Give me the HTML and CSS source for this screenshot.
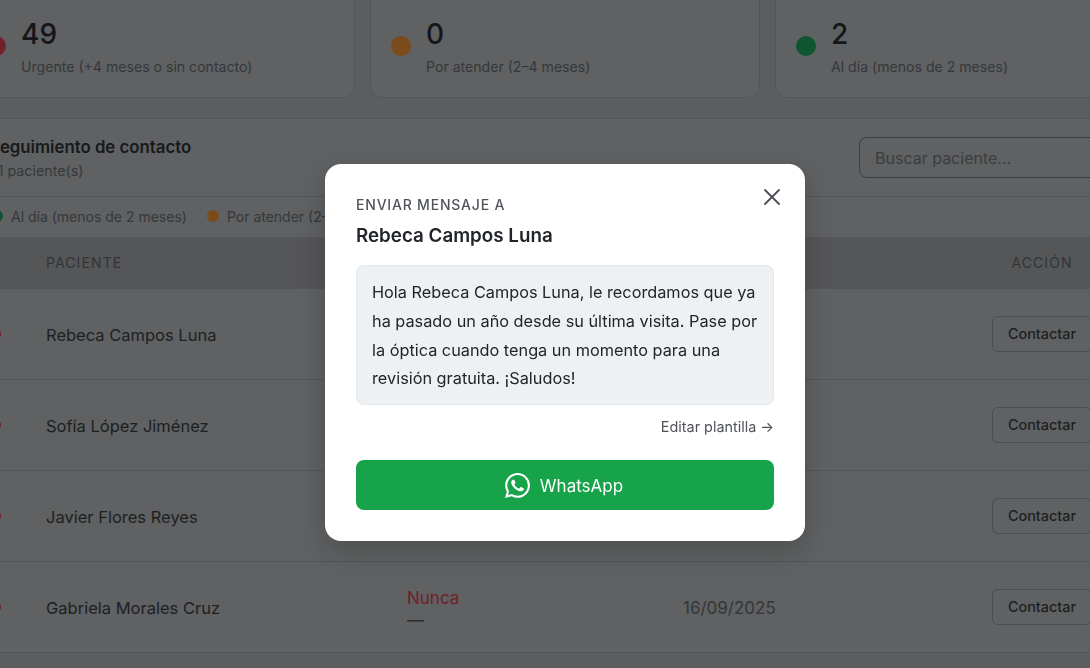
FILE: index.html
```html
<!DOCTYPE html>
<html lang="es">
<head>
<meta charset="utf-8">
<title>Seguimiento de contacto</title>
<link rel="stylesheet" href="styles.css">
</head>
<body>
<main class="page">
  <section class="stats">
    <div class="card"><span class="dot-lg red"></span><div><div class="num">49</div><div class="lbl">Urgente (+4 meses o sin contacto)</div></div></div>
    <div class="card"><span class="dot-lg orange"></span><div><div class="num">0</div><div class="lbl">Por atender (2–4 meses)</div></div></div>
    <div class="card"><span class="dot-lg green"></span><div><div class="num">2</div><div class="lbl">Al día (menos de 2 meses)</div></div></div>
  </section>
  <section class="panel">
    <header class="panel-head">
      <div><h2 class="title">Seguimiento de contacto</h2><div class="count">51 paciente(s)</div></div>
      <input class="search" placeholder="Buscar paciente...">
    </header>
    <div class="legend">
      <span class="leg"><span class="dot-sm green"></span>Al día (menos de 2 meses)</span>
      <span class="leg"><span class="dot-sm orange"></span>Por atender (2–4 meses)</span>
    </div>
    <div class="row thead"><span></span><span>PACIENTE</span><span></span><span></span><span class="act">ACCIÓN</span></div>
    <div class="row"><span class="dot-row"></span><span class="name">Rebeca Campos Luna</span><span></span><span></span><span class="act"><button class="btn">Contactar</button></span></div>
    <div class="row"><span class="dot-row"></span><span class="name">Sofía López Jiménez</span><span></span><span></span><span class="act"><button class="btn">Contactar</button></span></div>
    <div class="row"><span class="dot-row"></span><span class="name">Javier Flores Reyes</span><span></span><span></span><span class="act"><button class="btn">Contactar</button></span></div>
    <div class="row"><span class="dot-row"></span><span class="name">Gabriela Morales Cruz</span><span class="last"><span class="never">Nunca</span><span>—</span></span><span class="date">16/09/2025</span><span class="act"><button class="btn">Contactar</button></span></div>
  </section>
</main>
<div class="overlay">
  <div class="modal">
    <div class="modal-head">
      <div>
        <div class="eyebrow">ENVIAR MENSAJE A</div>
        <div class="who">Rebeca Campos Luna</div>
      </div>
      <svg class="close" viewBox="0 0 16 16" width="16" height="16" fill="none" stroke="#4b4f54" stroke-width="1.8" stroke-linecap="round"><path d="M1 1l14 14M15 1L1 15"/></svg>
    </div>
    <div class="msg">Hola Rebeca Campos Luna, le recordamos que ya ha pasado un año desde su última visita. Pase por la óptica cuando tenga un momento para una revisión gratuita. ¡Saludos!</div>
    <div class="edit-line"><span class="edit">Editar plantilla →</span></div>
    <button class="wa">
      <svg viewBox="0 0 24 24" width="25" height="25" fill="#fff"><path d="M17.472 14.382c-.297-.149-1.758-.867-2.03-.967-.273-.099-.471-.148-.67.15-.197.297-.767.966-.94 1.164-.173.199-.347.223-.644.075-.297-.15-1.255-.463-2.39-1.475-.883-.788-1.48-1.761-1.653-2.059-.173-.297-.018-.458.13-.606.134-.133.298-.347.446-.52.149-.174.198-.298.298-.497.099-.198.05-.371-.025-.52-.075-.149-.669-1.612-.916-2.207-.242-.579-.487-.5-.669-.51-.173-.008-.371-.01-.57-.01-.198 0-.52.074-.792.372-.272.297-1.04 1.016-1.04 2.479 0 1.462 1.065 2.875 1.213 3.074.149.198 2.096 3.2 5.077 4.487.709.306 1.262.489 1.694.625.712.227 1.36.195 1.871.118.571-.085 1.758-.719 2.006-1.413.248-.694.248-1.289.173-1.413-.074-.124-.272-.198-.57-.347m-5.421 7.403h-.004a9.87 9.87 0 01-5.031-1.378l-.361-.214-3.741.982.998-3.648-.235-.374a9.86 9.86 0 01-1.51-5.26c.001-5.45 4.436-9.884 9.888-9.884 2.64 0 5.122 1.03 6.988 2.898a9.825 9.825 0 012.893 6.994c-.003 5.45-4.437 9.884-9.885 9.884m8.413-18.297A11.815 11.815 0 0012.05 0C5.495 0 .16 5.335.157 11.892c0 2.096.547 4.142 1.588 5.945L.057 24l6.305-1.654a11.882 11.882 0 005.683 1.448h.005c6.554 0 11.89-5.335 11.893-11.893a11.821 11.821 0 00-3.48-8.413z"/></svg>
      <span>WhatsApp</span>
    </button>
  </div>
</div>
</body>
</html>
```

FILE: styles.css
```css
* { box-sizing: border-box; }
html, body { margin: 0; height: 100%; overflow: hidden; }
body {
  background: #5c5d5e;
  font-family: Inter, "Noto Sans", sans-serif;
  color: #222427;
}
.page { width: 1200px; margin: -40px 0 0 -35px; }
.stats { display: grid; grid-template-columns: repeat(3, 390px); gap: 15px; }
.card {
  height: 138px;
  padding: 56px 20px 0;
  display: flex;
  gap: 15px;
  background: #5f6162;
  border: 1px solid #555657;
  border-radius: 12px;
}
.dot-lg { width: 20px; height: 20px; border-radius: 50%; margin-top: 19px; flex: none; }
.red { background: #722029; }
.orange { background: #7c4b1c; }
.green { background: #0f5530; }
.num { font-size: 28px; font-weight: 500; line-height: 34px; color: #141619; }
.lbl { font-size: 14.1px; line-height: 20px; margin-top: 6px; color: #35383b; }
.panel { margin-top: 20px; background: #5f6162; border-top: 1px solid #545557; }
.panel-head {
  height: 78px;
  padding: 18px 0 0 24px;
  display: flex;
  justify-content: space-between;
  border-bottom: 1px solid #545557;
}
.title { margin: 0; font-size: 16.8px; line-height: 20px; font-weight: 600; color: #17191c; }
.count { font-size: 14.25px; line-height: 20px; margin-top: 4px; color: #35383b; }
.search {
  width: 292px;
  height: 41px;
  padding: 0 15px;
  margin-right: 14px;
  background: transparent;
  border: 1px solid #3c3e40;
  border-radius: 8px;
  font: 16px Inter, "Noto Sans", sans-serif;
}
.search::placeholder { color: #3b3d40; opacity: 1; }
.legend {
  height: 40px;
  padding: 0 0 2px 26px;
  display: flex;
  align-items: center;
  gap: 20px;
  font-size: 14px;
  color: #35383b;
}
.leg { display: flex; align-items: center; gap: 8px; }
.dot-sm { width: 12px; height: 12px; border-radius: 50%; }
.row {
  display: grid;
  grid-template-columns: 81px 361px 276px 309px 100px;
  align-items: center;
  height: 91px;
  border-bottom: 1px solid #545557;
}
.thead {
  height: 52px;
  background: #555658;
  font-size: 14px;
  letter-spacing: 1.1px;
  color: #323437;
}
.dot-row { width: 8px; height: 8px; margin-left: 28px; border-radius: 50%; background: #722029; }
.name { font-size: 16.5px; line-height: 22px; padding-top: 2px; color: #1d1f22; }
.last { display: flex; flex-direction: column; padding-top: 4px; font-size: 17px; line-height: 22px; color: #2a2c2f; }
.never { color: #722029; }
.date { font-size: 17px; padding-top: 2px; color: #343639; }
.act { text-align: center; }
.btn {
  width: 100px;
  height: 36px;
  padding: 0 0 2px;
  background: transparent;
  border: 1px solid #4c4d4f;
  border-radius: 6px;
  font: 500 14.4px Inter, "Noto Sans", sans-serif;
  color: #1d1f22;
}
.overlay {
  position: fixed;
  inset: 0;
  padding: 164px 0 0 325px;
}
.modal {
  width: 480px;
  height: 377px;
  padding: 31px 31px 0;
  background: #fff;
  border-radius: 16px;
  box-shadow: 0 10px 30px rgba(0, 0, 0, .2);
}
.modal-head { display: flex; justify-content: space-between; align-items: flex-start; }
.close { margin-top: -6px; margin-right: -6px; }
.eyebrow { font-size: 14px; line-height: 20px; letter-spacing: .8px; font-weight: 500; color: #50545a; }
.who { font-size: 18.8px; line-height: 24px; margin-top: 9px; font-weight: 600; color: #212529; }
.msg {
  margin-top: 17px;
  height: 140px;
  padding: 12px 15px;
  background: #eef1f4;
  border: 1px solid #e3e6ea;
  border-radius: 8px;
  font-size: 16.3px;
  line-height: 28.8px;
  color: #212529;
}
.edit-line { margin-top: 12px; text-align: right; font-size: 14.4px; line-height: 20px; color: #50545a; }
.wa {
  width: 100%;
  height: 50px;
  margin-top: 23px;
  padding: 1px 2px 0 0;
  display: flex;
  justify-content: center;
  align-items: center;
  gap: 10px;
  background: #16a34a;
  border: 0;
  border-radius: 8px;
  font: 400 17px/24px Inter, "Noto Sans", sans-serif;
  color: #fff;
}
.wa span { padding-top: 1px; }
```
